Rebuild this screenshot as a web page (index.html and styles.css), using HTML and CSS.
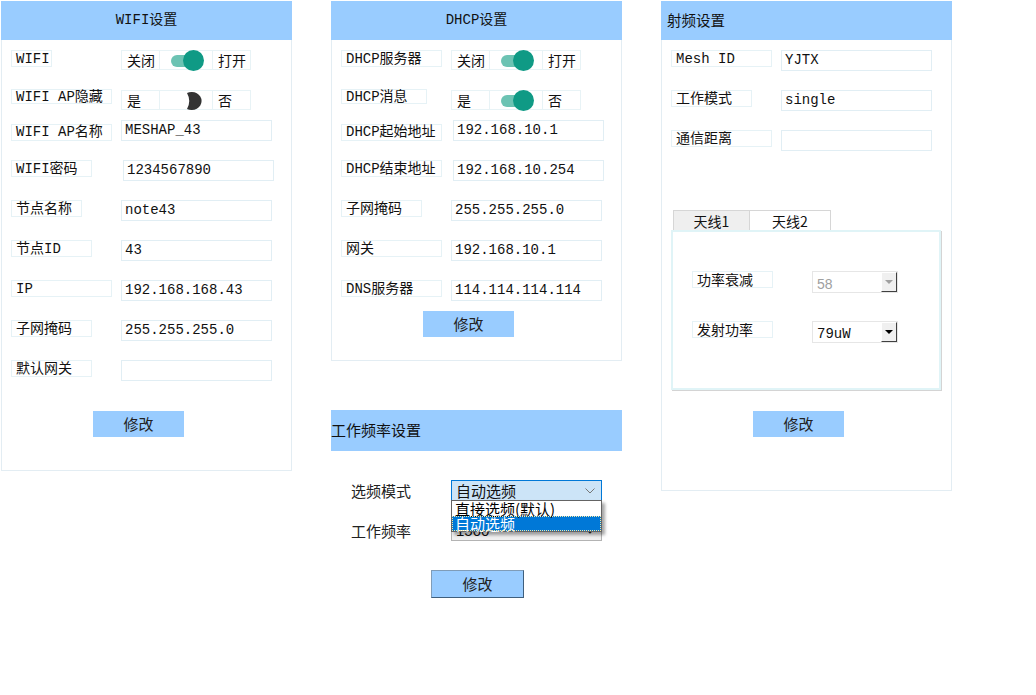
FILE: index.html
```html
<!DOCTYPE html>
<html lang="zh-CN">
<head>
<meta charset="utf-8">
<title>设置</title>
<link rel="stylesheet" href="styles.css">
</head>
<body>
<div class="page">

  <!-- WIFI -->
  <section class="panel panel-wifi">
    <h2 class="panel-head center">WIFI设置</h2>
    <div class="panel-body">
      <div class="row">
        <div class="cell-label"><span class="lbl w40">WIFI</span></div>
        <div class="switch-group">
          <span class="seg">关闭</span>
          <span class="seg seg-toggle"><span class="toggle on"></span></span>
          <span class="seg">打开</span>
        </div>
      </div>
      <div class="row">
        <div class="cell-label"><span class="lbl w100 short">WIFI AP隐藏</span></div>
        <div class="switch-group">
          <span class="seg">是</span>
          <span class="seg seg-toggle">
            <svg class="toggle-off" width="17" height="18" viewBox="0 0 17 18"><path d="M1 1 A10 9 0 1 1 1 17 Q5.5 9 1 1 Z" fill="#333"/></svg>
          </span>
          <span class="seg">否</span>
        </div>
      </div>
      <div class="row after-tight">
        <div class="cell-label"><span class="lbl w100 low">WIFI AP名称</span></div>
        <div class="field w152">MESHAP_43</div>
      </div>
      <div class="row">
        <div class="cell-label"><span class="lbl w80">WIFI密码</span></div>
        <div class="field shift">1234567890</div>
      </div>
      <div class="row">
        <div class="cell-label"><span class="lbl w70">节点名称</span></div>
        <div class="field">note43</div>
      </div>
      <div class="row">
        <div class="cell-label"><span class="lbl w80">节点ID</span></div>
        <div class="field">43</div>
      </div>
      <div class="row">
        <div class="cell-label"><span class="lbl w100">IP</span></div>
        <div class="field">192.168.168.43</div>
      </div>
      <div class="row">
        <div class="cell-label"><span class="lbl w80">子网掩码</span></div>
        <div class="field">255.255.255.0</div>
      </div>
      <div class="row">
        <div class="cell-label"><span class="lbl w80">默认网关</span></div>
        <div class="field"></div>
      </div>
      <button class="btn btn-wifi" type="button">修改</button>
    </div>
  </section>

  <!-- middle column -->
  <div class="column">
    <section class="panel panel-dhcp">
      <h2 class="panel-head center">DHCP设置</h2>
      <div class="panel-body">
        <div class="row">
          <div class="cell-label"><span class="lbl w100">DHCP服务器</span></div>
          <div class="switch-group">
            <span class="seg">关闭</span>
            <span class="seg seg-toggle"><span class="toggle on"></span></span>
            <span class="seg">打开</span>
          </div>
        </div>
        <div class="row">
          <div class="cell-label"><span class="lbl w85 short">DHCP消息</span></div>
          <div class="switch-group">
            <span class="seg">是</span>
            <span class="seg seg-toggle"><span class="toggle on"></span></span>
            <span class="seg">否</span>
          </div>
        </div>
        <div class="row after-tight">
          <div class="cell-label"><span class="lbl w100 low">DHCP起始地址</span></div>
          <div class="field shift">192.168.10.1</div>
        </div>
        <div class="row">
          <div class="cell-label"><span class="lbl w100">DHCP结束地址</span></div>
          <div class="field shift">192.168.10.254</div>
        </div>
        <div class="row">
          <div class="cell-label"><span class="lbl w80">子网掩码</span></div>
          <div class="field">255.255.255.0</div>
        </div>
        <div class="row">
          <div class="cell-label"><span class="lbl w100">网关</span></div>
          <div class="field">192.168.10.1</div>
        </div>
        <div class="row">
          <div class="cell-label"><span class="lbl w100">DNS服务器</span></div>
          <div class="field">114.114.114.114</div>
        </div>
        <button class="btn btn-dhcp" type="button">修改</button>
      </div>
    </section>

    <section class="freq">
      <h2 class="freq-head">工作频率设置</h2>
      <div class="freq-body">
        <div class="freq-row">
          <span class="freq-label">选频模式</span>
          <div class="select select-open">
            <span class="select-text">自动选频</span>
            <svg class="chev" width="10" height="6" viewBox="0 0 10 6"><path d="M0.5 0.5 L5 5 L9.5 0.5" fill="none" stroke="#777" stroke-width="1"/></svg>
            <ul class="options">
              <li class="option">直接选频(默认)</li>
              <li class="option selected">自动选频</li>
            </ul>
          </div>
        </div>
        <div class="freq-row">
          <span class="freq-label">工作频率</span>
          <div class="select select-plain">
            <span class="select-text">1500</span>
            <svg class="chev" width="10" height="6" viewBox="0 0 10 6"><path d="M0.5 0.5 L5 5 L9.5 0.5" fill="none" stroke="#333" stroke-width="1.2"/></svg>
          </div>
        </div>
        <button class="btn btn-freq" type="button">修改</button>
      </div>
    </section>
  </div>

  <!-- RF -->
  <section class="panel panel-rf">
    <h2 class="panel-head left">射频设置</h2>
    <div class="panel-body">
      <div class="row">
        <div class="cell-label"><span class="lbl w100">Mesh ID</span></div>
        <div class="field">YJTX</div>
      </div>
      <div class="row">
        <div class="cell-label"><span class="lbl w80">工作模式</span></div>
        <div class="field">single</div>
      </div>
      <div class="row">
        <div class="cell-label"><span class="lbl w100">通信距离</span></div>
        <div class="field"></div>
      </div>

      <div class="tabs">
        <div class="tab-strip">
          <span class="tab">天线1</span>
          <span class="tab active">天线2</span>
        </div>
        <div class="tab-body">
          <div class="tab-row">
            <div class="tab-label"><span class="lbl w80">功率衰减</span></div>
            <div class="combo disabled">
              <span class="combo-text">58</span>
              <span class="combo-btn"><span class="tri"></span></span>
            </div>
          </div>
          <div class="tab-row">
            <div class="tab-label"><span class="lbl w80">发射功率</span></div>
            <div class="combo">
              <span class="combo-text mono">79uW</span>
              <span class="combo-btn"><span class="tri"></span></span>
            </div>
          </div>
        </div>
      </div>
      <button class="btn btn-rf" type="button">修改</button>
    </div>
  </section>

</div>
</body>
</html>
```

FILE: styles.css
```css
* {
  box-sizing: border-box;
}

html,
body {
  margin: 0;
  padding: 0;
  background: #ffffff;
}

body {
  font-family: "Liberation Mono", "Noto Sans CJK SC", monospace;
  font-size: 14px;
  color: #111111;
}

.page {
  display: flex;
  align-items: flex-start;
  gap: 39px;
  padding: 1px 0 0 1px;
  width: 1036px;
  height: 695px;
  overflow: hidden;
}

.column {
  display: flex;
  flex-direction: column;
  width: 291px;
}

/* ---------- panels ---------- */
.panel {
  width: 291px;
  border: 1px solid #e3edf3;
  border-top: 0;
}

.panel-wifi {
  height: 470px;
}

.panel-dhcp {
  height: 360px;
}

.panel-rf {
  height: 490px;
}

.panel-head {
  margin: 0 -1px;
  height: 39px;
  background: #99ccff;
  font-size: 14px;
  font-weight: normal;
  line-height: 39px;
  white-space: nowrap;
}

.panel-head.center {
  text-align: center;
}

.panel-head.left {
  padding-left: 6px;
  font-family: "Noto Sans CJK SC", sans-serif;
  font-size: 14.5px;
  line-height: 37px;
}

.panel-body {
  display: flex;
  flex-direction: column;
  align-items: flex-start;
  padding: 10px 0 0 9px;
}

/* ---------- rows ---------- */
.row {
  display: flex;
  align-items: flex-start;
  height: 21px;
}

.row + .row {
  margin-top: 19px;
}

.row.after-tight {
  margin-top: 9px;
}

.cell-label {
  flex: none;
  width: 110px;
}

.lbl {
  display: block;
  height: 17px;
  padding-left: 4px;
  border: 1px solid #e6f2f6;
  line-height: 16px;
  white-space: nowrap;
}

.lbl.short {
  height: 15px;
  line-height: 14px;
  margin-top: -1px;
}

.lbl.low {
  margin-top: 4px;
  line-height: 15px;
}

.w40 { width: 41px; }
.w70 { width: 71px; }
.w80 { width: 81px; }
.w85 { width: 86px; }
.w100 { width: 101px; }
.w152 { width: 153px; }

.field {
  width: 151px;
  height: 21px;
  padding-left: 3px;
  border: 1px solid #e1eef4;
  line-height: 19px;
  white-space: nowrap;
}

.field.shift {
  margin-left: 2px;
}

/* ---------- switch ---------- */
.switch-group {
  display: flex;
}

.seg {
  width: 39px;
  height: 20px;
  padding-left: 5px;
  border: 1px solid #e8f3f6;
  line-height: 18px;
  white-space: nowrap;
  font-family: "Noto Sans CJK SC", sans-serif;
}

.seg-toggle {
  position: relative;
  width: 52px;
  padding: 0;
  border-left: 0;
  border-right: 0;
}

.toggle {
  position: absolute;
  left: 11px;
  top: 4px;
  width: 26px;
  height: 12px;
  border-radius: 6px;
  background: #6cc3b3;
}

.toggle::after {
  content: "";
  position: absolute;
  left: 12px;
  top: -5px;
  width: 21px;
  height: 21px;
  border-radius: 50%;
  background: #0f9a85;
}

.toggle-off {
  position: absolute;
  left: 26px;
  top: 1px;
}

/* ---------- buttons ---------- */
.btn {
  display: block;
  width: 91px;
  height: 26px;
  margin-left: 82px;
  padding: 0;
  border: 0;
  background: #99ccff;
  color: #222;
  font-family: "Noto Sans CJK SC", sans-serif;
  font-size: 15px;
  line-height: 26px;
}

.btn-wifi {
  margin-top: 30px;
}

.btn-dhcp {
  margin-top: 10px;
}

.btn-rf {
  margin-top: 21px;
}

.btn-freq {
  width: 93px;
  height: 28px;
  margin-left: 80px;
  margin-top: 29px;
  border: 1px solid #7f9cb8;
  border-right-color: #3f5f7d;
  border-bottom-color: #3f5f7d;
}

/* ---------- frequency ---------- */
.freq {
  margin-top: 49px;
  width: 291px;
}

.freq-head {
  margin: 0;
  height: 41px;
  background: #99ccff;
  font-family: "Noto Sans CJK SC", sans-serif;
  font-size: 15px;
  font-weight: normal;
  line-height: 40px;
  white-space: nowrap;
}

.freq-body {
  display: flex;
  flex-direction: column;
  align-items: flex-start;
  padding: 29px 0 0 20px;
}

.freq-row {
  display: flex;
  align-items: center;
  height: 21px;
}

.freq-row + .freq-row {
  margin-top: 19px;
}

.freq-label {
  width: 100px;
  font-family: "Noto Sans CJK SC", sans-serif;
  font-size: 15px;
  color: #222;
  line-height: 19px;
}

.select {
  position: relative;
  display: flex;
  align-items: center;
  width: 151px;
  height: 21px;
  padding: 0 6px 0 4px;
  font-family: "Noto Sans CJK SC", sans-serif;
  font-size: 15px;
  line-height: 19px;
}

.select-open {
  border: 1px solid #0078d7;
  background: #cce4f7;
}

.select-plain {
  border: 1px solid #b3b3b3;
  background: #f0f0f0;
  font-family: "Liberation Sans", sans-serif;
}

.select-text {
  flex: 1;
  white-space: nowrap;
}

.options {
  position: absolute;
  left: -1px;
  top: 19px;
  z-index: 2;
  width: 151px;
  margin: 0;
  padding: 0;
  list-style: none;
  background: #ffffff;
  border: 1px solid #646464;
  box-shadow: 3px 3px 3px rgba(0, 0, 0, 0.35);
}

.option {
  height: 15px;
  padding-left: 3px;
  line-height: 15px;
  font-size: 15px;
  color: #000;
  white-space: nowrap;
}

.option.selected {
  background: #0078d7;
  color: #ffffff;
  outline: 1px dotted #f3e9a8;
  outline-offset: -1px;
}

/* ---------- RF tabs ---------- */
.tabs {
  margin-top: 59px;
}

.tab-strip {
  display: flex;
  padding-left: 2px;
}

.tab {
  width: 77px;
  height: 20px;
  border: 1px solid #d6d6d6;
  border-bottom: 0;
  background: #efefef;
  text-align: center;
  font-family: "Noto Sans CJK SC", sans-serif;
  font-size: 14px;
  line-height: 20px;
}

.tab.active {
  width: 81px;
  border-left: 0;
  background: #ffffff;
}

.tab-body {
  width: 270px;
  height: 160px;
  padding: 39px 0 0 19px;
  border: 2px solid #e0f4f7;
  box-shadow: 1px 1px 0 #d4d4d4;
}

.tab-row {
  display: flex;
  align-items: flex-start;
}

.tab-row + .tab-row {
  margin-top: 28px;
}

.tab-label {
  width: 120px;
}

.tab-label .lbl {
  line-height: 15px;
  font-family: "Noto Sans CJK SC", sans-serif;
}

.combo {
  display: flex;
  width: 86px;
  height: 22px;
  border: 1px solid #e6e6e6;
}

.combo-text {
  flex: 1;
  padding: 4px 0 0 4px;
  line-height: 17px;
  font-family: "Liberation Sans", sans-serif;
  font-size: 14px;
}

.combo-text.mono {
  font-family: "Liberation Mono", monospace;
}

.combo.disabled .combo-text {
  color: #a0a0a0;
}

.combo-btn {
  display: flex;
  align-items: center;
  justify-content: center;
  width: 16px;
  height: 20px;
  background: #f0f0f0;
  border-top: 1px solid #ffffff;
  border-left: 1px solid #ffffff;
  border-right: 1px solid #404040;
  border-bottom: 1px solid #404040;
}

.tri {
  width: 0;
  height: 0;
  border-left: 4px solid transparent;
  border-right: 4px solid transparent;
  border-top: 4px solid #000;
}

.combo.disabled .tri {
  border-top-color: #a0a0a0;
}
```
